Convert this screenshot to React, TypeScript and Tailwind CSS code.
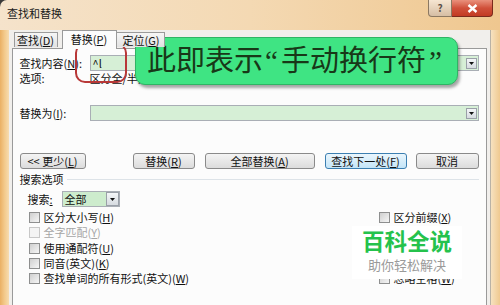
import React from "react";

const FONT = { fontFamily: '"Noto Sans CJK SC", "Noto Sans", sans-serif' };
const QUOTE = { fontFamily: '"Liberation Serif", serif' };

function DropArrow({ className = "" }: { className?: string }) {
  return (
    <div
      className={`flex items-center justify-center border border-[#9aa0a8] bg-gradient-to-b from-[#f4f6f8] to-[#d6dbe0] ${className}`}
    >
      <svg width="5" height="3" viewBox="0 0 5 3">
        <path d="M0 0h5L2.5 3z" fill="#111" />
      </svg>
    </div>
  );
}

function Check({ disabled = false }: { disabled?: boolean }) {
  return (
    <div
      className={`w-[11px] h-[11px] shrink-0 border ${
        disabled
          ? "border-[#c8c8c8] bg-[#f4f4f4]"
          : "border-[#8e8f8f] bg-gradient-to-br from-[#cfcfcf] to-[#f6f6f6]"
      }`}
    />
  );
}

function CheckRow({
  label,
  disabled = false,
}: {
  label: React.ReactNode;
  disabled?: boolean;
}) {
  return (
    <div className="h-[15.3px] flex items-center gap-[4px] whitespace-nowrap">
      <Check disabled={disabled} />
      <span className={disabled ? "text-[#a6a6a6]" : "text-[#111]"}>{label}</span>
    </div>
  );
}

function Btn({
  children,
  w,
  primary = false,
}: {
  children: React.ReactNode;
  w: string;
  primary?: boolean;
}) {
  return (
    <div
      className={`${w} h-[16px] flex items-center justify-center rounded-[3px] border whitespace-nowrap ${
        primary
          ? "border-[#3c7fb1] bg-gradient-to-b from-[#eaf6fd] to-[#c4e5f8]"
          : "border-[#8a8a8a] bg-gradient-to-b from-[#f4f4f4] to-[#dcdcdc]"
      }`}
    >
      {children}
    </div>
  );
}

export default function App() {
  return (
    <div
      className="w-[500px] h-[305px] relative overflow-hidden bg-[#3a3a3a] text-[11px] leading-none text-[#111]"
      style={FONT}
    >
      <div className="w-full h-full rounded-tl-[7px] overflow-hidden flex flex-col">
        {/* title bar */}
        <div className="h-[30px] flex items-center pl-[7px] pb-[4px] bg-gradient-to-r from-[#f5e3cb] via-[#f4d9b3] to-[#efc78f]">
          <span className="text-[11px] text-[#1a1a1a]">查找和替换</span>
        </div>

        <div className="flex flex-1">
          {/* left frame */}
          <div className="w-[9px] bg-gradient-to-r from-[#eab064] via-[#f3c98a] to-[#f7dcb0]" />

          {/* dialog body */}
          <div className="flex-1 bg-[#f1efec] flex flex-col pl-[3px] pr-[3px]">
            {/* tabs */}
            <div className="h-[18px] flex items-end pl-[2px] relative z-10">
              <div className="w-[44px] h-[15px] mb-[1px] border border-b-0 border-[#9a9a9a] bg-gradient-to-b from-[#f6f6f6] to-[#e2e2e2] flex items-center justify-center">
                查找(<u>D</u>)
              </div>
              <div className="w-[55px] h-[19px] ml-[4px] -mb-[1px] border border-b-0 border-[#9a9a9a] bg-[#fcfcfc] flex items-center justify-center pb-[2px]">
                替换(<u>P</u>)
              </div>
              <div className="w-[48px] h-[15px] mb-[1px] border border-b-0 border-l-0 border-[#9a9a9a] bg-gradient-to-b from-[#f6f6f6] to-[#e2e2e2] flex items-center pl-[6px]">
                定位(<u>G</u>)
              </div>
            </div>

            {/* tab panel */}
            <div className="flex-1 border border-b-0 border-[#9a9a9a] bg-[#fcfcfc] flex flex-col pt-[6px] pl-[7px] pr-[7px]">
              {/* find what */}
              <div className="h-[16px] flex items-center">
                <span className="w-[70px]">
                  查找内容(<u>N</u>):
                </span>
                <div className="flex-1 h-[16px] border border-[#a9aeb5] bg-[#d6efd6] flex items-center pl-[2px] pr-[1px]">
                  <span className="flex-1 text-[11px]">^l</span>
                  <DropArrow className="w-[11px] h-[11px]" />
                </div>
              </div>
              <div className="h-[14px] flex items-center">
                <span className="w-[70px]">选项:</span>
                <span>区分全/半角</span>
              </div>

              {/* replace with */}
              <div className="h-[16px] mt-[20px] flex items-center">
                <span className="w-[70px]">
                  替换为(<u>I</u>):
                </span>
                <div className="flex-1 h-[16px] border border-[#a9aeb5] bg-[#d6efd6] flex items-center justify-end pr-[1px]">
                  <DropArrow className="w-[11px] h-[11px]" />
                </div>
              </div>

              {/* buttons */}
              <div className="mt-[32px] flex items-center">
                <Btn w="w-[66px]">
                  &lt;&lt; 更少(<u>L</u>)
                </Btn>
                <div className="ml-[47px]">
                  <Btn w="w-[62px]">
                    替换(<u>R</u>)
                  </Btn>
                </div>
                <div className="ml-[10px]">
                  <Btn w="w-[110px]">
                    全部替换(<u>A</u>)
                  </Btn>
                </div>
                <div className="ml-[10px]">
                  <Btn w="w-[82px]" primary>
                    查找下一处(<u>F</u>)
                  </Btn>
                </div>
                <div className="ml-[9px]">
                  <Btn w="w-[63px]">取消</Btn>
                </div>
              </div>

              {/* search options group */}
              <div className="mt-[3px] h-[14px] flex items-center gap-[3px]">
                <span>搜索选项</span>
                <div className="flex-1 border-t border-[#dde3e8]" />
              </div>

              <div className="mt-[5px] h-[16px] flex items-center pl-[8px]">
                <span className="w-[34px]">
                  搜索<u>:</u>
                </span>
                <div className="w-[58px] h-[16px] border border-[#a9aeb5] bg-[#cdeccd] flex items-center">
                  <span className="flex-1 pl-[2px]">全部</span>
                  <DropArrow className="w-[13px] h-[14px]" />
                </div>
              </div>

              <div className="mt-[3px] flex pl-[9px]">
                <div className="flex-1 flex flex-col">
                  <CheckRow label={<>区分大小写(<u>H</u>)</>} />
                  <CheckRow label={<>全字匹配(<u>Y</u>)</>} disabled />
                  <CheckRow label={<>使用通配符(<u>U</u>)</>} />
                  <CheckRow label={<>同音(英文)(<u>K</u>)</>} />
                  <CheckRow label={<>查找单词的所有形式(英文)(<u>W</u>)</>} />
                </div>
                <div className="w-[100px] flex flex-col">
                  <CheckRow label={<>区分前缀(<u>X</u>)</>} />
                  {/* rows hidden behind the watermark */}
                  <div className="h-[54px]" />
                  {/* last row, only its lower part shows under the watermark */}
                  <div className="h-[6px] overflow-hidden">
                    <div className="-mt-[8px]">
                      <CheckRow label={<>忽略空格(<u>W</u>)</>} />
                    </div>
                  </div>
                </div>
              </div>
            </div>
          </div>

          {/* right frame */}
          <div className="w-[11px] border-l border-[#b9b2a6] bg-gradient-to-r from-[#f7e2c0] to-[#efc98f]" />
        </div>
      </div>

      {/* caption buttons */}
      <div className="absolute left-[428px] top-0 flex">
        <div className="w-[24px] h-[17px] rounded-bl-[4px] border border-t-0 border-[#8b7862] bg-gradient-to-b from-[#f6e6d2] to-[#d6bea4] flex items-center justify-center text-[10px] font-bold text-[#5a5048]">
          ?
        </div>
        <div className="w-[41px] h-[17px] rounded-br-[4px] border border-t-0 border-l-0 border-[#7a2a1c] bg-gradient-to-b from-[#e9907c] via-[#d0503a] to-[#c23a22] flex items-center justify-center">
          <svg width="11" height="9" viewBox="0 0 11 9">
            <path d="M1.5 1l8 7M9.5 1l-8 7" stroke="#fff" strokeWidth="2.4" />
          </svg>
        </div>
      </div>

      {/* red ring around the ^l mark */}
      <div className="absolute left-[75px] top-[43px] w-[52px] h-[40px] rounded-[10px] border-2 border-[#b83838]" />

      {/* callout */}
      <div className="absolute left-[135px] top-[37px] w-[323px] h-[48px] rounded-[10px] border border-[#2fb464] bg-[#3fe483] shadow-[2px_3px_3px_rgba(0,0,0,0.35)] flex items-center pl-[11px] pb-[2px]">
        <span className="text-[29px] text-[#183818] leading-none whitespace-nowrap">
          此即表示
          <span className="ml-[2px] mr-[3px]" style={QUOTE}>
            “
          </span>
          手动换行符
          <span className="ml-[3px]" style={QUOTE}>
            ”
          </span>
        </span>
      </div>

      {/* watermark */}
      <div className="absolute left-[352px] top-[226px] w-[110px] h-[53px] bg-white flex flex-col items-center pt-[3px]">
        <span className="text-[22.5px] font-bold text-[#25c24c] leading-none">
          百科全说
        </span>
        <span className="mt-[6px] text-[13px] text-[#9a9a9a] leading-none">
          助你轻松解决
        </span>
      </div>
    </div>
  );
}
